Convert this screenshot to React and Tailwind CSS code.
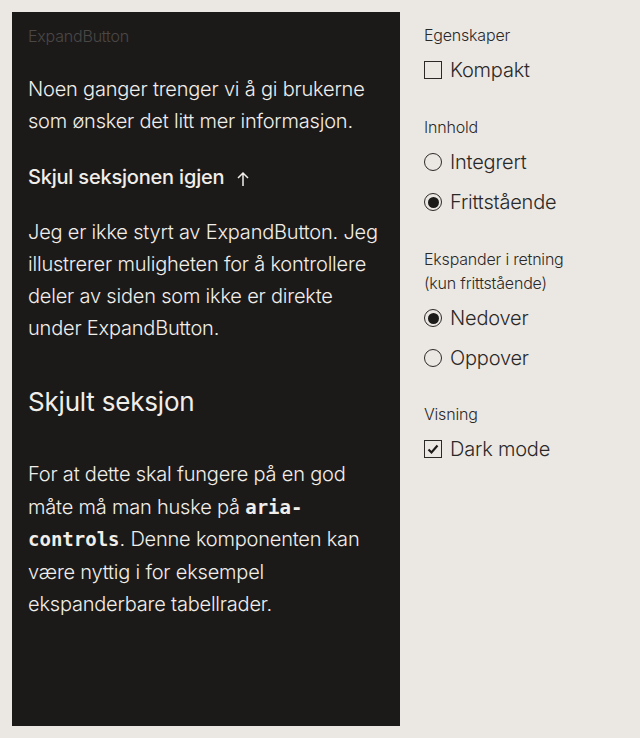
import { useState } from "react";

function Radio({ checked, label, onClick }) {
  return (
    <button onClick={onClick} className="flex items-center gap-2 h-[40px] text-[20px] font-light text-[#2b2928]">
      <span className="w-[18px] h-[18px] rounded-full border-[1.5px] border-[#2b2928] flex items-center justify-center">
        {checked && <span className="w-[11px] h-[11px] rounded-full bg-[#1d1b1a]" />}
      </span>
      {label}
    </button>
  );
}

function Check({ checked, label, onClick }) {
  return (
    <button onClick={onClick} className="flex items-center gap-2 h-[40px] text-[20px] font-light text-[#2b2928]">
      <span className="w-[18px] h-[18px] border-[1.5px] border-[#2b2928] flex items-center justify-center">
        {checked && (
          <svg width="12" height="12" viewBox="0 0 12 12" fill="none">
            <path d="M1.5 6.5 L4.5 9.5 L10.5 2.5" stroke="#1d1b1a" strokeWidth="2.2" />
          </svg>
        )}
      </span>
      {label}
    </button>
  );
}

export default function App() {
  const [compact, setCompact] = useState(false);
  const [content, setContent] = useState("fritt");
  const [dir, setDir] = useState("ned");
  const [dark, setDark] = useState(true);

  return (
    <div
      className="min-h-[738px] bg-[#ebe8e4] flex gap-6 p-3 tracking-[-0.2px]"
      style={{ fontFamily: "Inter, 'Liberation Sans', sans-serif" }}
    >
      <div className="w-[388px] h-[714px] bg-[#1c1a19] px-4 pt-[12px] text-[#f1eeea] shrink-0 font-light">
        <div className="text-[16px] leading-[24px] text-[#4a4745]">ExpandButton</div>
        <p className="mt-[25px] text-[20px] leading-[32px]">
          Noen ganger trenger vi å gi brukerne som ønsker det litt mer informasjon.
        </p>
        <button className="mt-[24px] flex items-center gap-3 text-[20px] leading-[32px] font-medium">
          Skjul seksjonen igjen
          <svg width="14" height="16" viewBox="0 0 14 16" fill="none" className="mt-1">
            <path d="M7 15 V2 M2 7 L7 2 L12 7" stroke="#f1eeea" strokeWidth="1.5" />
          </svg>
        </button>
        <p className="mt-[23px] text-[20px] leading-[32px]">
          Jeg er ikke styrt av ExpandButton. Jeg illustrerer muligheten for å kontrollere deler av siden som ikke er
          direkte under ExpandButton.
        </p>
        <h2 className="mt-[38px] text-[26px] leading-[40px] font-normal">Skjult seksjon</h2>
        <p className="mt-[36px] text-[20px] leading-[32.5px]">
          For at dette skal fungere på en god måte må man huske på{" "}
          <code
            className="font-bold text-[19px] leading-none tracking-normal"
            style={{ fontFamily: "'DejaVu Sans Mono', monospace" }}
          >
            aria-controls
          </code>
          . Denne komponenten kan være nyttig i for eksempel ekspanderbare tabellrader.
        </p>
      </div>

      <div className="flex flex-col pt-[11px] text-[#2b2928] font-light">
        <div className="text-[16px] leading-[24px]">Egenskaper</div>
        <div className="mt-[3px]">
          <Check checked={compact} label="Kompakt" onClick={() => setCompact(!compact)} />
        </div>

        <div className="mt-[25px] text-[16px] leading-[24px]">Innhold</div>
        <div className="mt-[3px] flex flex-col">
          <Radio checked={content === "int"} label="Integrert" onClick={() => setContent("int")} />
          <Radio checked={content === "fritt"} label="Frittstående" onClick={() => setContent("fritt")} />
        </div>

        <div className="mt-[25px] text-[16px] leading-[24px]">
          Ekspander i retning
          <br />
          (kun frittstående)
        </div>
        <div className="mt-[3px] flex flex-col">
          <Radio checked={dir === "ned"} label="Nedover" onClick={() => setDir("ned")} />
          <Radio checked={dir === "opp"} label="Oppover" onClick={() => setDir("opp")} />
        </div>

        <div className="mt-[24px] text-[16px] leading-[24px]">Visning</div>
        <div className="mt-[3px]">
          <Check checked={dark} label="Dark mode" onClick={() => setDark(!dark)} />
        </div>
      </div>
    </div>
  );
}
